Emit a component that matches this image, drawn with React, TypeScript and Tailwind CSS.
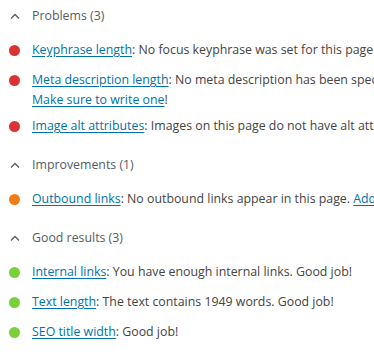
import React from "react";

type Item = {
  color: string;
  link: string;
  text: React.ReactNode;
};

type Section = {
  title: string;
  items: Item[];
};

const RED = "bg-[#dc3232]";
const ORANGE = "bg-[#ee7c1b]";
const GREEN = "bg-[#7ad03a]";

const sections: Section[] = [
  {
    title: "Problems (3)",
    items: [
      {
        color: RED,
        link: "Keyphrase length",
        text: <>: No focus keyphrase was set for this page. Please set a keyphrase.</>,
      },
      {
        color: RED,
        link: "Meta description length",
        text: (
          <>
            : No meta description has been specified. Search engines will display copy from the page instead.
            <br />
            <a href="#" className="text-[#0073aa] underline underline-offset-2">
              Make sure to write one
            </a>
            !
          </>
        ),
      },
      {
        color: RED,
        link: "Image alt attributes",
        text: <>: Images on this page do not have alt attributes. Add some!</>,
      },
    ],
  },
  {
    title: "Improvements (1)",
    items: [
      {
        color: ORANGE,
        link: "Outbound links",
        text: (
          <>
            : No outbound links appear in this page.{" "}
            <a href="#" className="text-[#0073aa] underline underline-offset-2">
              Add some
            </a>
            !
          </>
        ),
      },
    ],
  },
  {
    title: "Good results (3)",
    items: [
      { color: GREEN, link: "Internal links", text: <>: You have enough internal links. Good job!</> },
      { color: GREEN, link: "Text length", text: <>: The text contains 1949 words. Good job!</> },
      { color: GREEN, link: "SEO title width", text: <>: Good job!</> },
    ],
  },
];

function Chevron() {
  return (
    <svg width="10" height="6" viewBox="0 0 10 6" fill="none" className="shrink-0">
      <polyline points="1,5.5 5,1.5 9,5.5" stroke="#555d66" strokeWidth="1.3" />
    </svg>
  );
}

export default function App() {
  return (
    <div
      className="w-[374px] h-[357px] overflow-hidden bg-white text-[12.35px] leading-[19.5px] text-[#444]"
      style={{ fontFamily: '"Open Sans", "Noto Sans", sans-serif' }}
    >
      <div className="w-[700px]">
        {sections.map((section) => (
          <div key={section.title} className="mb-[8px]">
            {/* Section header */}
            <div className="flex items-center h-[32px] pl-[10px]">
              <Chevron />
              <span className="ml-[12px] text-[#555d66]">{section.title}</span>
            </div>
            {/* Results list */}
            <ul className="mt-[8px] flex flex-col gap-[5px]">
              {section.items.map((item) => (
                <li key={item.link} className="flex items-start min-h-[25px] pb-[2px] pl-[9px]">
                  <span className={`mt-[4.5px] w-[11px] h-[11px] rounded-full shrink-0 ${item.color}`} />
                  <p className="ml-[12px] whitespace-nowrap">
                    <a href="#" className="text-[#0073aa] underline underline-offset-2">
                      {item.link}
                    </a>
                    {item.text}
                  </p>
                </li>
              ))}
            </ul>
          </div>
        ))}
      </div>
    </div>
  );
}
